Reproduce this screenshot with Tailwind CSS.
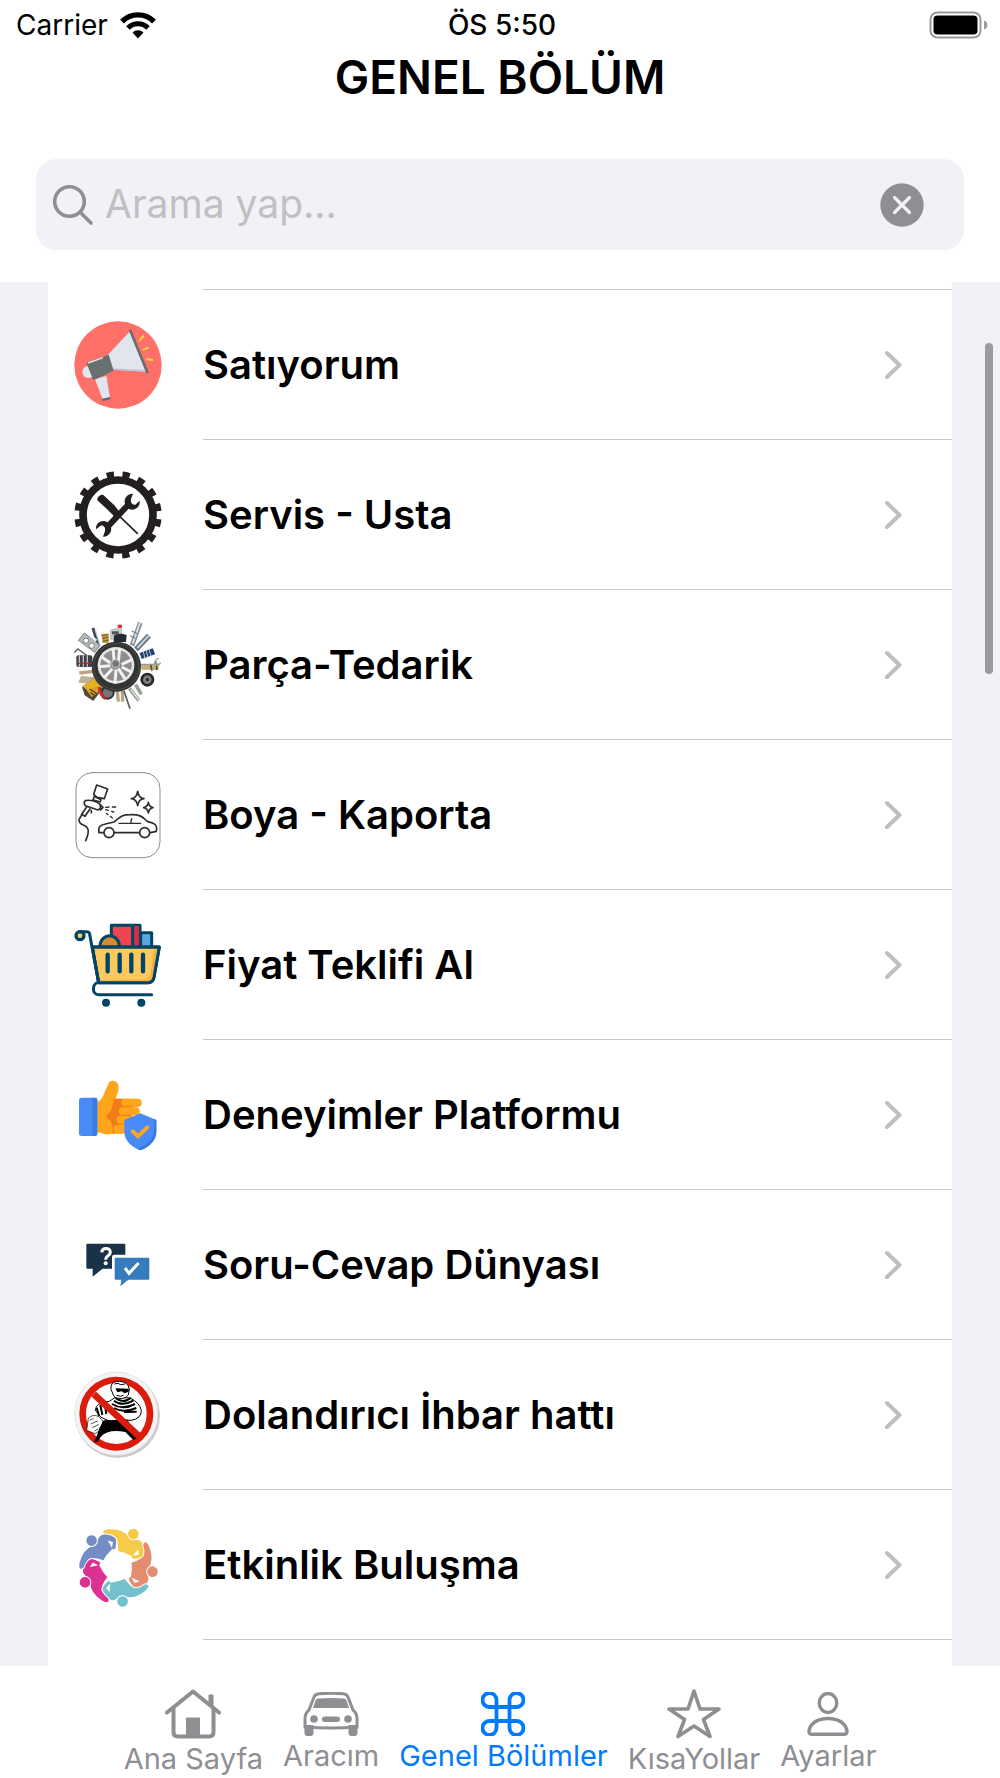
<!DOCTYPE html>
<html lang="tr">
  <head>
    <meta charset="UTF-8" />
    <meta name="viewport" content="width=device-width, initial-scale=1.0" />
    <title>Genel Bölüm</title>
    <script src="https://cdn.jsdelivr.net/npm/@tailwindcss/browser@4"></script>
  </head>
  <body
    class="flex min-h-screen flex-col bg-white font-['Inter','Liberation_Sans',sans-serif] text-black"
  >
    <header class="px-9 pb-8">
      <!-- Status bar -->
      <div class="-mx-5 -mr-6 grid h-[50px] grid-cols-3 items-center text-[28px]">
        <div class="flex items-center gap-3">
          <span>Carrier</span>
          <svg class="h-7 w-9" viewBox="0 0 36 28" fill="none" stroke="#000">
            <path d="M2 10.500a22.600 22.600 0 0 1 32 0" stroke-width="5.400" />
            <path d="M8 17a14 14 0 0 1 20 0" stroke-width="5" />
            <path d="M12.500 21.500a7.800 7.800 0 0 1 11 0L18 27.500Z" fill="#000" stroke="none" />
          </svg>
        </div>
        <div class="text-center font-medium">ÖS 5:50</div>
        <svg class="h-7 w-[59px] justify-self-end" viewBox="0 0 59 28">
          <rect x="1.500" y="1.500" width="50" height="25" rx="7" fill="none" stroke="#9a9a9a" stroke-width="2" />
          <rect x="4.500" y="4.500" width="44" height="19" rx="4" />
          <path d="M55 9.500c4.500 1.500 4.500 7.500 0 9Z" fill="#9a9a9a" />
        </svg>
      </div>

      <h1 class="text-center text-[46px] leading-[54px] font-semibold">GENEL BÖLÜM</h1>

      <form class="mt-[55px] flex h-[91px] items-center rounded-[20px] bg-[#f2f1f7] pr-10 pl-4">
        <svg class="size-[42px] shrink-0" viewBox="0 0 42 42" fill="none" stroke="#8e8e93" stroke-width="3.600" stroke-linecap="round">
          <circle cx="17.500" cy="17.500" r="14.800" />
          <path d="m28.500 28.500 10.500 10.500" />
        </svg>
        <input
          type="text"
          aria-label="Arama yap"
          placeholder="Arama yap..."
          class="ml-[11px] min-w-0 flex-1 text-[39px] outline-none placeholder:text-[#bfbfc4]"
        />
        <button type="reset" aria-label="Temizle">
          <svg class="size-11" viewBox="0 0 44 44">
            <circle cx="22" cy="22" r="21.700" fill="#8e8e93" />
            <path d="m14.500 14.500 15 15m0-15-15 15" stroke="#f2f1f7" stroke-width="3.200" stroke-linecap="round" />
          </svg>
        </button>
      </form>
    </header>

    <main class="relative flex flex-1 flex-col bg-[#f2f1f7] px-12">
      <ul class="flex-1 bg-white pt-2 text-[40px] font-semibold">
        <li class="-mt-px ml-[155px] h-px bg-[#c8c8ca]"></li>
        <li>
          <a href="#" class="flex h-[150px] items-center pl-[26px]">
            <svg class="size-[88px] shrink-0" viewBox="44 62 264 264">
              <circle cx="176" cy="194" r="131" fill="#ff7069" />
              <circle cx="87" cy="215" r="18" fill="#e1e6ee" />
              <path d="m107 237 34-10 11 66-22 4Z" fill="#e1e6ee" />
              <path d="m128 295 25-5v7l-24 6Z" fill="#5f696b" />
              <path d="m145 164 67-71 48 121-98-6Z" fill="#e1e6ee" />
              <path d="m162 204 96 5 2 5-98-6Z" fill="#bcc6d2" />
              <path d="m81 187 67-24 15 48-61 29Z" fill="#66706f" />
              <path d="m86 188 45-16" stroke="#e1e6ee" stroke-width="4" />
              <path d="m213 91 51 125" stroke="#66706f" stroke-width="8" stroke-linecap="round" />
              <path d="m240 122 13-16m-3 43 18-8m-7 35 20 3" stroke="#ffd83f" stroke-width="6" />
            </svg>
            <div class="ml-[41px] flex h-full flex-1 items-center justify-between border-b border-[#c8c8ca] pr-[50px]">
              <span>Satıyorum</span>
              <svg class="h-[30px] w-[18px]" viewBox="0 0 18 30" fill="none" stroke="#bfbfbf" stroke-width="4" stroke-linecap="round" stroke-linejoin="round"><path d="m3 3 12.500 12L3 27" /></svg>
            </div>
          </a>
        </li>
        <li>
          <a href="#" class="flex h-[150px] items-center pl-[26px]">
            <svg class="size-[88px] shrink-0" viewBox="44 511 264 264">
              <g fill="none" stroke="#231f20">
                <circle cx="176" cy="643" r="105" stroke-width="23" />
                <circle cx="176" cy="643" r="121" stroke-width="20" pathLength="16" stroke-dasharray=".46 .54" stroke-dashoffset="-.27" />
                <path d="m143 680 63-67" stroke-width="18" />
                <path d="m184 650 50 48" stroke-width="5" stroke-linecap="round" />
              </g>
              <g fill="#231f20">
                <path d="M114 599c-2-9 10-19 18-16l33 31c7 7 8 14 17 18l7 11-13 12-13-8c-4-9-12-12-18-20Z" />
                <path d="M221 579c-20-1-30 19-23 34l11 12c17 7 35-6 32-25l-13 12c-10 1-15-6-13-17Z" />
                <path d="M131 708c20 1 30-19 22-35l-11-10c-16-7-34 5-32 23l14-11c10-2 15 7 13 16Z" />
              </g>
            </svg>
            <div class="ml-[41px] flex h-full flex-1 items-center justify-between border-b border-[#c8c8ca] pr-[50px]">
              <span>Servis - Usta</span>
              <svg class="h-[30px] w-[18px]" viewBox="0 0 18 30" fill="none" stroke="#bfbfbf" stroke-width="4" stroke-linecap="round" stroke-linejoin="round"><path d="m3 3 12.500 12L3 27" /></svg>
            </div>
          </a>
        </li>
        <li>
          <a href="#" class="flex h-[150px] items-center pl-[26px]">
            <svg class="size-[88px] shrink-0" viewBox="44 60 264 264">
              <!-- parts around the tyre -->
              <g fill="none">
                <path d="m118 136-17-55" stroke="#3b4654" stroke-width="9" />
                <path d="m122 133-15-49" stroke="#c3cdd5" stroke-width="4" />
                <path d="m57 118 18-22 47 37-16 21Z" fill="#b5bbb9" stroke="#7c8584" stroke-width="3" />
                <circle cx="80" cy="119" r="8" fill="#fff" stroke="#757d7c" stroke-width="3" />
                <circle cx="97" cy="134" r="8" fill="#fff" stroke="#757d7c" stroke-width="3" />
                <path d="m94 105 17 14" stroke="#f1f1ef" stroke-width="8" />
                <path d="m45 155 10-11 43 30" stroke="#5d6366" stroke-width="4" />
                <path d="M126 98h22v28h-18Z" fill="#c69b42" />
                <path d="m127 105 20-5m-18 13 19-5m-18 13 19-4" stroke="#725b27" stroke-width="3" />
                <path d="M151 88q15-10 38-6l-2 36h-35Z" fill="#c4c8c8" />
                <path d="M158 91h20v9h-20Z" fill="#4c575b" />
                <path d="M175 71h13v10h-13Z" fill="#e13435" />
                <path d="M164 103q17-9 38-1l-2 21h-37Z" fill="#252c33" />
                <path d="m218 133 25-68" stroke="#7f8b96" stroke-width="14" />
                <path d="m220 128 22-63" stroke="#d9e0e5" stroke-width="6" />
                <path d="m212 104 17 8m-12-22 17 8" stroke="#64717d" stroke-width="3" />
                <path d="m230 145 39-41" stroke="#66747f" stroke-width="16" />
                <path d="m234 141 35-38" stroke="#cad4d9" stroke-width="6" />
                <path d="m244 165 40-14" stroke="#24426f" stroke-width="19" />
                <path d="m252 153 5 19m4-22 5 19m4-22 5 19" stroke="#b8c9dc" stroke-width="3" />
                <path d="M240 188h43q3-17 18-17l-11 8 6 10 10-6q-5 16-21 13h-45" fill="#919899" />
                <path d="M246 199h52" stroke="#c3b17a" stroke-width="15" />
                <path d="m274 192 4 17m14-15v13" stroke="#544d33" stroke-width="5" />
                <rect x="51" y="163" width="48" height="35" rx="6" fill="#403e43" />
                <path d="M60 163v34m12-34v34m12-34v34" stroke="#c0c2c4" stroke-width="4" />
                <path d="M52 187h45" stroke="#a53235" stroke-width="4" />
                <path d="m60 216 44-5" stroke="#b9a584" stroke-width="10" />
                <path d="m65 225 43 4-8 20-43-4Z" fill="#bdb292" />
                <path d="m68 258 35-24 30 25-31 41-26-17Z" fill="#51483a" />
                <path d="m69 255 34-21 31 24-26 11-18 5Z" fill="#e5ae24" />
                <path d="m82 268 33-12 4 16-22 17Z" fill="#d7a126" />
                <path d="m91 264 21 14m-19-3 12 8" stroke="#584819" stroke-width="4" />
                <circle cx="145" cy="275" r="18" fill="#777" stroke="#303334" stroke-width="6" />
                <path d="M120 258q3 25 18 35" stroke="#bd2935" stroke-width="9" />
                <path d="m174 270 3 32m12-34 1 34" stroke="#b7a585" stroke-width="10" />
                <path d="m194 270 18 53" stroke="#52595a" stroke-width="5" />
                <path d="m210 262 28 36m-9-47 17 29" stroke="#98a395" stroke-width="11" />
                <path d="m214 266 24 30" stroke="#e3e6df" stroke-width="4" />
                <circle cx="264" cy="236" r="17" fill="#777" stroke="#292929" stroke-width="8" />
                <circle cx="264" cy="236" r="7" fill="#2b2b2b" stroke="#b9b9b9" stroke-width="2" />
              </g>
              <ellipse cx="171" cy="197" rx="74" ry="75" fill="#323434" />
              <ellipse cx="171" cy="197" rx="68" ry="69" fill="none" stroke="#565858" stroke-width="2" />
              <circle cx="170" cy="193" r="55" fill="#e2e3e2" />
              <circle cx="170" cy="193" r="47" fill="#8f8f8f" />
              <g stroke="#f2f2f2" stroke-width="9">
                <path d="m165 184-4-41m16 41 4-41m6 47 31-14m-31 22 31 16m-41-11 20 30m-27-27-3 42m-8-45-25 28m19-37-36 3m36-11-29-20" />
              </g>
              <circle cx="169" cy="188" r="12" fill="#777" stroke="#c7c7c7" stroke-width="3" />
            </svg>
            <div class="ml-[41px] flex h-full flex-1 items-center justify-between border-b border-[#c8c8ca] pr-[50px]">
              <span>Parça-Tedarik</span>
              <svg class="h-[30px] w-[18px]" viewBox="0 0 18 30" fill="none" stroke="#bfbfbf" stroke-width="4" stroke-linecap="round" stroke-linejoin="round"><path d="m3 3 12.500 12L3 27" /></svg>
            </div>
          </a>
        </li>
        <li>
          <a href="#" class="flex h-[150px] items-center pl-[26px]">
            <svg class="size-[88px] shrink-0" viewBox="44 509 264 264" fill="none" stroke="#2d2d2d" stroke-width="5" stroke-linecap="round" stroke-linejoin="round">
              <rect x="50" y="514" width="252" height="255" rx="48" stroke="#8b8b8b" stroke-width="3" />
              <path d="m112 551 33 12-10 29-22-4-10-9Z" />
              <path d="m105 585 20 10-3 7-21-7Z" />
              <path d="M78 598q15-4 36 5l9 7v11l-7 5-38-13q-7-8 0-15Z" />
              <path d="m123 611 8 7-7 8m-42-9-15 22 10 6 15-22m4 5v6" />
              <path d="m67 641-8 14q0 10 11 15c20 7 21 21 9 48" />
              <path d="m139 618 10-1m10 0h10m-30 8 8 2m10 3 6 2m-22 4 5 4m7 5 6 5" stroke-width="4" />
              <path d="M134 694h-15q-6-22 19-26l26-6c25-20 28-22 49-22 32-1 36 7 52 21 22 5 30 10 26 29l-18 4m-33 0H164" />
              <circle cx="149" cy="694" r="15" />
              <circle cx="256" cy="694" r="15" />
              <path d="M179 666h65m-27-14-3 14" stroke-width="4" />
              <path d="M235 570q3 20 19 22-16 2-19 21-3-19-19-21 16-2 19-22Zm32 33q2 13 14 16-12 2-14 16-2-14-14-16 12-3 14-16Z" stroke-width="5" />
            </svg>
            <div class="ml-[41px] flex h-full flex-1 items-center justify-between border-b border-[#c8c8ca] pr-[50px]">
              <span>Boya - Kaporta</span>
              <svg class="h-[30px] w-[18px]" viewBox="0 0 18 30" fill="none" stroke="#bfbfbf" stroke-width="4" stroke-linecap="round" stroke-linejoin="round"><path d="m3 3 12.500 12L3 27" /></svg>
            </div>
          </a>
        </li>
        <li>
          <a href="#" class="flex h-[150px] items-center pl-[26px]">
            <svg class="size-[88px] shrink-0" viewBox="44 59 264 264" fill="none" stroke="#004565" stroke-width="9" stroke-linejoin="round" stroke-linecap="round">
              <path d="M244 135V94h33v42" fill="#5ba8dc" />
              <path d="M156 135V72h86v64" fill="#ee4450" />
              <path d="M221 74h18v58h-18Z" fill="#d72d42" stroke="none" />
              <path d="M220 74v58" />
              <path d="M122 135c0-18 13-32 29-32s29 14 29 32" fill="#d38b35" />
              <path d="M99 137h201l-16 91q-3 16-17 16H118Z" fill="#fdc95e" />
              <path d="M286 144 273 218q-3 16-18 17l-135 2 2 5h144q14-1 17-17l14-81Z" fill="#f4ae43" stroke="none" />
              <path d="M99 137h201l-16 91q-3 16-17 16H118Z" />
              <circle cx="62" cy="103" r="12" fill="#fdc95e" stroke-width="10" />
              <path d="M62 91h20q8 0 9 8l7 38 20 106c-21 3-21 37 0 37h159" />
              <path d="M145 160v50m36-50v50m35-50v50m35-50v50" stroke-width="13" />
              <circle cx="140" cy="304" r="12" fill="#004565" stroke="none" />
              <circle cx="246" cy="304" r="12" fill="#004565" stroke="none" />
            </svg>
            <div class="ml-[41px] flex h-full flex-1 items-center justify-between border-b border-[#c8c8ca] pr-[50px]">
              <span>Fiyat Teklifi Al</span>
              <svg class="h-[30px] w-[18px]" viewBox="0 0 18 30" fill="none" stroke="#bfbfbf" stroke-width="4" stroke-linecap="round" stroke-linejoin="round"><path d="m3 3 12.500 12L3 27" /></svg>
            </div>
          </a>
        </li>
        <li>
          <a href="#" class="flex h-[150px] items-center pl-[26px]">
            <svg class="size-[88px] shrink-0" viewBox="44 508 264 264">
              <path d="M114 601q13-6 20-25l14-32c9-14 29-5 30 10q1 17-10 37h70l-3 104-101 3-9-5h-11Z" fill="#ffa51b" />
              <path d="M208 590h34v76l-34 28Z" fill="#fff" />
              <path d="M164 591h24l32 8v36l-22 50-19 5-18 5-1-20-6-17-15-13 17-19Z" fill="#f17b19" />
              <g fill="#ffa51b">
                <rect x="186" y="591" width="61" height="23" rx="11" />
                <rect x="178" y="617" width="63" height="23" rx="11" />
                <rect x="171" y="643" width="60" height="23" rx="11" />
                <rect x="163" y="669" width="50" height="25" rx="11" />
              </g>
              <path d="M197 612h38q9 0 11-10 1 13-11 13h-38m-7 24h42q9-1 9-10 0 12-9 12h-42" fill="#ef8d1a" />
              <rect x="59" y="588" width="55" height="115" rx="8" fill="#488bf7" />
              <path d="M99 588h8q7 0 7 8v99q0 8-7 8h-8Z" fill="#397de1" />
              <path d="m243 635 48 20v35q-1 36-48 56-47-19-48-56v-35Z" fill="#488bf7" />
              <path d="m285 652 6 3v35q-1 36-48 56l-9-4q50-19 51-56Z" fill="#3478df" />
              <path d="m220 689 16 15 28-27" fill="none" stroke="#ffa51b" stroke-width="12" stroke-linecap="round" />
            </svg>
            <div class="ml-[41px] flex h-full flex-1 items-center justify-between border-b border-[#c8c8ca] pr-[50px]">
              <span>Deneyimler Platformu</span>
              <svg class="h-[30px] w-[18px]" viewBox="0 0 18 30" fill="none" stroke="#bfbfbf" stroke-width="4" stroke-linecap="round" stroke-linejoin="round"><path d="m3 3 12.500 12L3 27" /></svg>
            </div>
          </a>
        </li>
        <li>
          <a href="#" class="flex h-[150px] items-center pl-[26px]">
            <svg class="size-[88px] shrink-0" viewBox="44 28 264 264">
              <path d="M84 96h111q3 0 3 3v30h-33q-7 0-7 7v35h-28l-30 24v-24H84q-3 0-3-3V99q0-3 3-3Z" fill="#193247" />
              <path d="M169 138h98q3 0 3 3v60q0 3-3 3h-60l-24 20 3-20h-17q-3 0-3-3v-60q0-3 3-3Z" fill="#357cbc" />
              <path d="M127 122c2-15 26-15 26 0 0 11-14 10-14 22" fill="none" stroke="#fff" stroke-width="9" />
              <circle cx="139" cy="155" r="6" fill="#fff" />
              <path d="m197 169 12 16 29-31" fill="none" stroke="#fff" stroke-width="9" />
            </svg>
            <div class="ml-[41px] flex h-full flex-1 items-center justify-between border-b border-[#c8c8ca] pr-[50px]">
              <span>Soru-Cevap Dünyası</span>
              <svg class="h-[30px] w-[18px]" viewBox="0 0 18 30" fill="none" stroke="#bfbfbf" stroke-width="4" stroke-linecap="round" stroke-linejoin="round"><path d="m3 3 12.500 12L3 27" /></svg>
            </div>
          </a>
        </li>
        <li>
          <a href="#" class="flex h-[150px] items-center pl-[26px]">
            <svg class="size-[88px] shrink-0" viewBox="44 57 264 264">
              <circle cx="175" cy="191" r="127" fill="#ccc" />
              <circle cx="171" cy="185" r="125" fill="#f4f4f4" stroke="#ddd" stroke-width="2" />
              <circle cx="171" cy="185" r="101" fill="#fff" stroke="#da1c0d" stroke-width="20" />
              <!-- burglar -->
              <path d="M108 175q2-25 42-27l18-12 44 2q29 14 34 37 1 25-31 30l-34-2-26 7-31-15Z" fill="#fff" stroke="#000" stroke-width="3" />
              <path d="m112 167 7 24m4-32 6 30m7-36 5 33m28-48q22 19 46-1m-51 9q24 19 58 0m-64 10q32 20 69 0m-63 12q28 16 67 0m-37 12 38-1" fill="none" stroke="#000" stroke-width="6" />
              <path d="M155 102q4-15 26-14 25 1 29 23l-3 18q-11 13-30 10-15-2-17-16l-5-10Z" fill="#fff" stroke="#000" stroke-width="3" />
              <path d="m168 109 40 1v9l-12 5-9-6-13 3Z" />
              <path d="m165 96 11-2 8 4 13-2m-25 34 12 3 9-4" fill="none" stroke="#000" stroke-width="3" />
              <path d="M87 198q14-13 32-4l11 13-3 24-20 14-25-10Z" fill="#fff" stroke="#000" stroke-width="2" />
              <path d="m91 205 12-6m-9 17 21-9m-16 20 19-10m-12 20 10-6" stroke="#000" stroke-width="2" />
              <path d="m133 205 72-2 21 48 6 10-11 2-23-23q-52-10-74 15l-9 14-12 2 9-18q6-25 21-48Z" />
              <path d="m103 126 135 126" stroke="#da1c0d" stroke-width="20" />
            </svg>
            <div class="ml-[41px] flex h-full flex-1 items-center justify-between border-b border-[#c8c8ca] pr-[50px]">
              <span>Dolandırıcı İhbar hattı</span>
              <svg class="h-[30px] w-[18px]" viewBox="0 0 18 30" fill="none" stroke="#bfbfbf" stroke-width="4" stroke-linecap="round" stroke-linejoin="round"><path d="m3 3 12.500 12L3 27" /></svg>
            </div>
          </a>
        </li>
        <li>
          <a href="#" class="flex h-[150px] items-center pl-[26px]">
            <!-- one figure, turned five times round the circle -->
            <svg class="size-[88px] shrink-0" viewBox="44 506 264 264">
              <defs>
                <g id="figure">
                  <path d="M131 540q2-8 19-9 40-2 59 23 7 8 21 8 19 0 23 20 4 18-4 31-9 5-27 7-6-2-4-8l-10-5q-12-7-31-10 0-36-11-44-15-7-29-6Z" stroke="#fff" stroke-width="6" paint-order="stroke" />
                  <path d="m237 591 1 16-18 3Z" fill="#fff" />
                  <circle cx="222" cy="545" r="16" stroke="#fff" stroke-width="6" paint-order="stroke" />
                </g>
              </defs>
              <use href="#figure" fill="#f7ca48" />
              <use href="#figure" fill="#e48c70" transform="rotate(72 173 641)" />
              <use href="#figure" fill="#72c1cd" transform="rotate(144 173 641)" />
              <use href="#figure" fill="#dc3192" transform="rotate(216 173 641)" />
              <use href="#figure" fill="#758dc5" transform="rotate(288 173 641)" />
              <circle cx="173" cy="641" r="43" fill="#fff" />
            </svg>
            <div class="ml-[41px] flex h-full flex-1 items-center justify-between border-b border-[#c8c8ca] pr-[50px]">
              <span>Etkinlik Buluşma</span>
              <svg class="h-[30px] w-[18px]" viewBox="0 0 18 30" fill="none" stroke="#bfbfbf" stroke-width="4" stroke-linecap="round" stroke-linejoin="round"><path d="m3 3 12.500 12L3 27" /></svg>
            </div>
          </a>
        </li>
      </ul>
      <!-- Scroll indicator -->
      <div class="absolute top-[61px] right-[7px] h-[331px] w-2 rounded-full bg-[#9b9b9d]"></div>
    </main>

    <nav class="flex h-28 items-center justify-center gap-5 pt-5 text-[29px] leading-8 text-[#8e8e93]">
      <a href="#" class="flex flex-col items-center gap-1">
        <svg class="h-[50px] w-[58px]" viewBox="0 0 58 50" fill="none" stroke="currentColor" stroke-width="4" stroke-linecap="round" stroke-linejoin="round">
          <path d="M3 23.500 29 2.500l26 21M9.500 19v24q0 4.500 4.500 4.500h31q4.500 0 4.500-4.500V19" />
          <path d="M23 29.500h12v17H23ZM45.500 6.500h3v11l-3-2.500Z" fill="currentColor" stroke-width="2" />
        </svg>
        Ana Sayfa
      </a>
      <a href="#" class="flex flex-col items-center gap-1">
        <svg class="h-11 w-14" viewBox="0 0 56 44" fill="currentColor">
          <path d="M6 18 11 5q1-3 5-3.300 12-1 24 0 4 .3 5 3.300l5 13q4 3 4 9v8q-26 2-52 0v-8q0-6 4-9Z" fill="none" stroke="currentColor" stroke-width="3" />
          <path d="M15.500 6.500q12.500-1 25 0 2.500 0 3 2l2.500 7.500H10l2.500-7.500q.5-2 3-2Z" />
          <circle cx="11" cy="27" r="3.800" />
          <circle cx="45" cy="27" r="3.800" />
          <rect x="19" y="24.500" width="18" height="5.500" rx="2.700" />
          <path d="M1.500 33h9v8q0 3-3 3h-3q-3 0-3-3ZM45.500 33h9v8q0 3-3 3h-3q-3 0-3-3Z" />
        </svg>
        Aracım
      </a>
      <a href="#" class="flex flex-col items-center gap-1 text-[#007aff]" aria-current="page">
        <svg class="size-11" viewBox="0 0 44 44" fill="none" stroke="currentColor" stroke-width="3.800">
          <path d="M15 15H9a7 7 0 1 1 6.500-7v28A7 7 0 1 1 9 29h26a7 7 0 1 1-6.500 7V8A7 7 0 1 1 35 15Z" />
        </svg>
        Genel Bölümler
      </a>
      <a href="#" class="flex flex-col items-center gap-1">
        <svg class="h-[50px] w-[54px]" viewBox="0 0 54 50" fill="none" stroke="currentColor" stroke-width="3.600" stroke-linejoin="round">
          <path d="m27 2 6 18h19L36.500 30.500l6.500 17L27 37 11 47.500l6.500-17L2 20h19Z" />
        </svg>
        KısaYollar
      </a>
      <a href="#" class="flex flex-col items-center gap-1">
        <svg class="h-11 w-[42px]" viewBox="0 0 42 44" fill="none" stroke="currentColor" stroke-width="3.400">
          <ellipse cx="21" cy="11" rx="8.800" ry="9.500" />
          <path d="M5 42.300q-3 0-3-3C3 31 11 26.500 21 26.500S39 31 40 39.300q0 3-3 3Z" />
        </svg>
        Ayarlar
      </a>
    </nav>
  </body>
</html>
